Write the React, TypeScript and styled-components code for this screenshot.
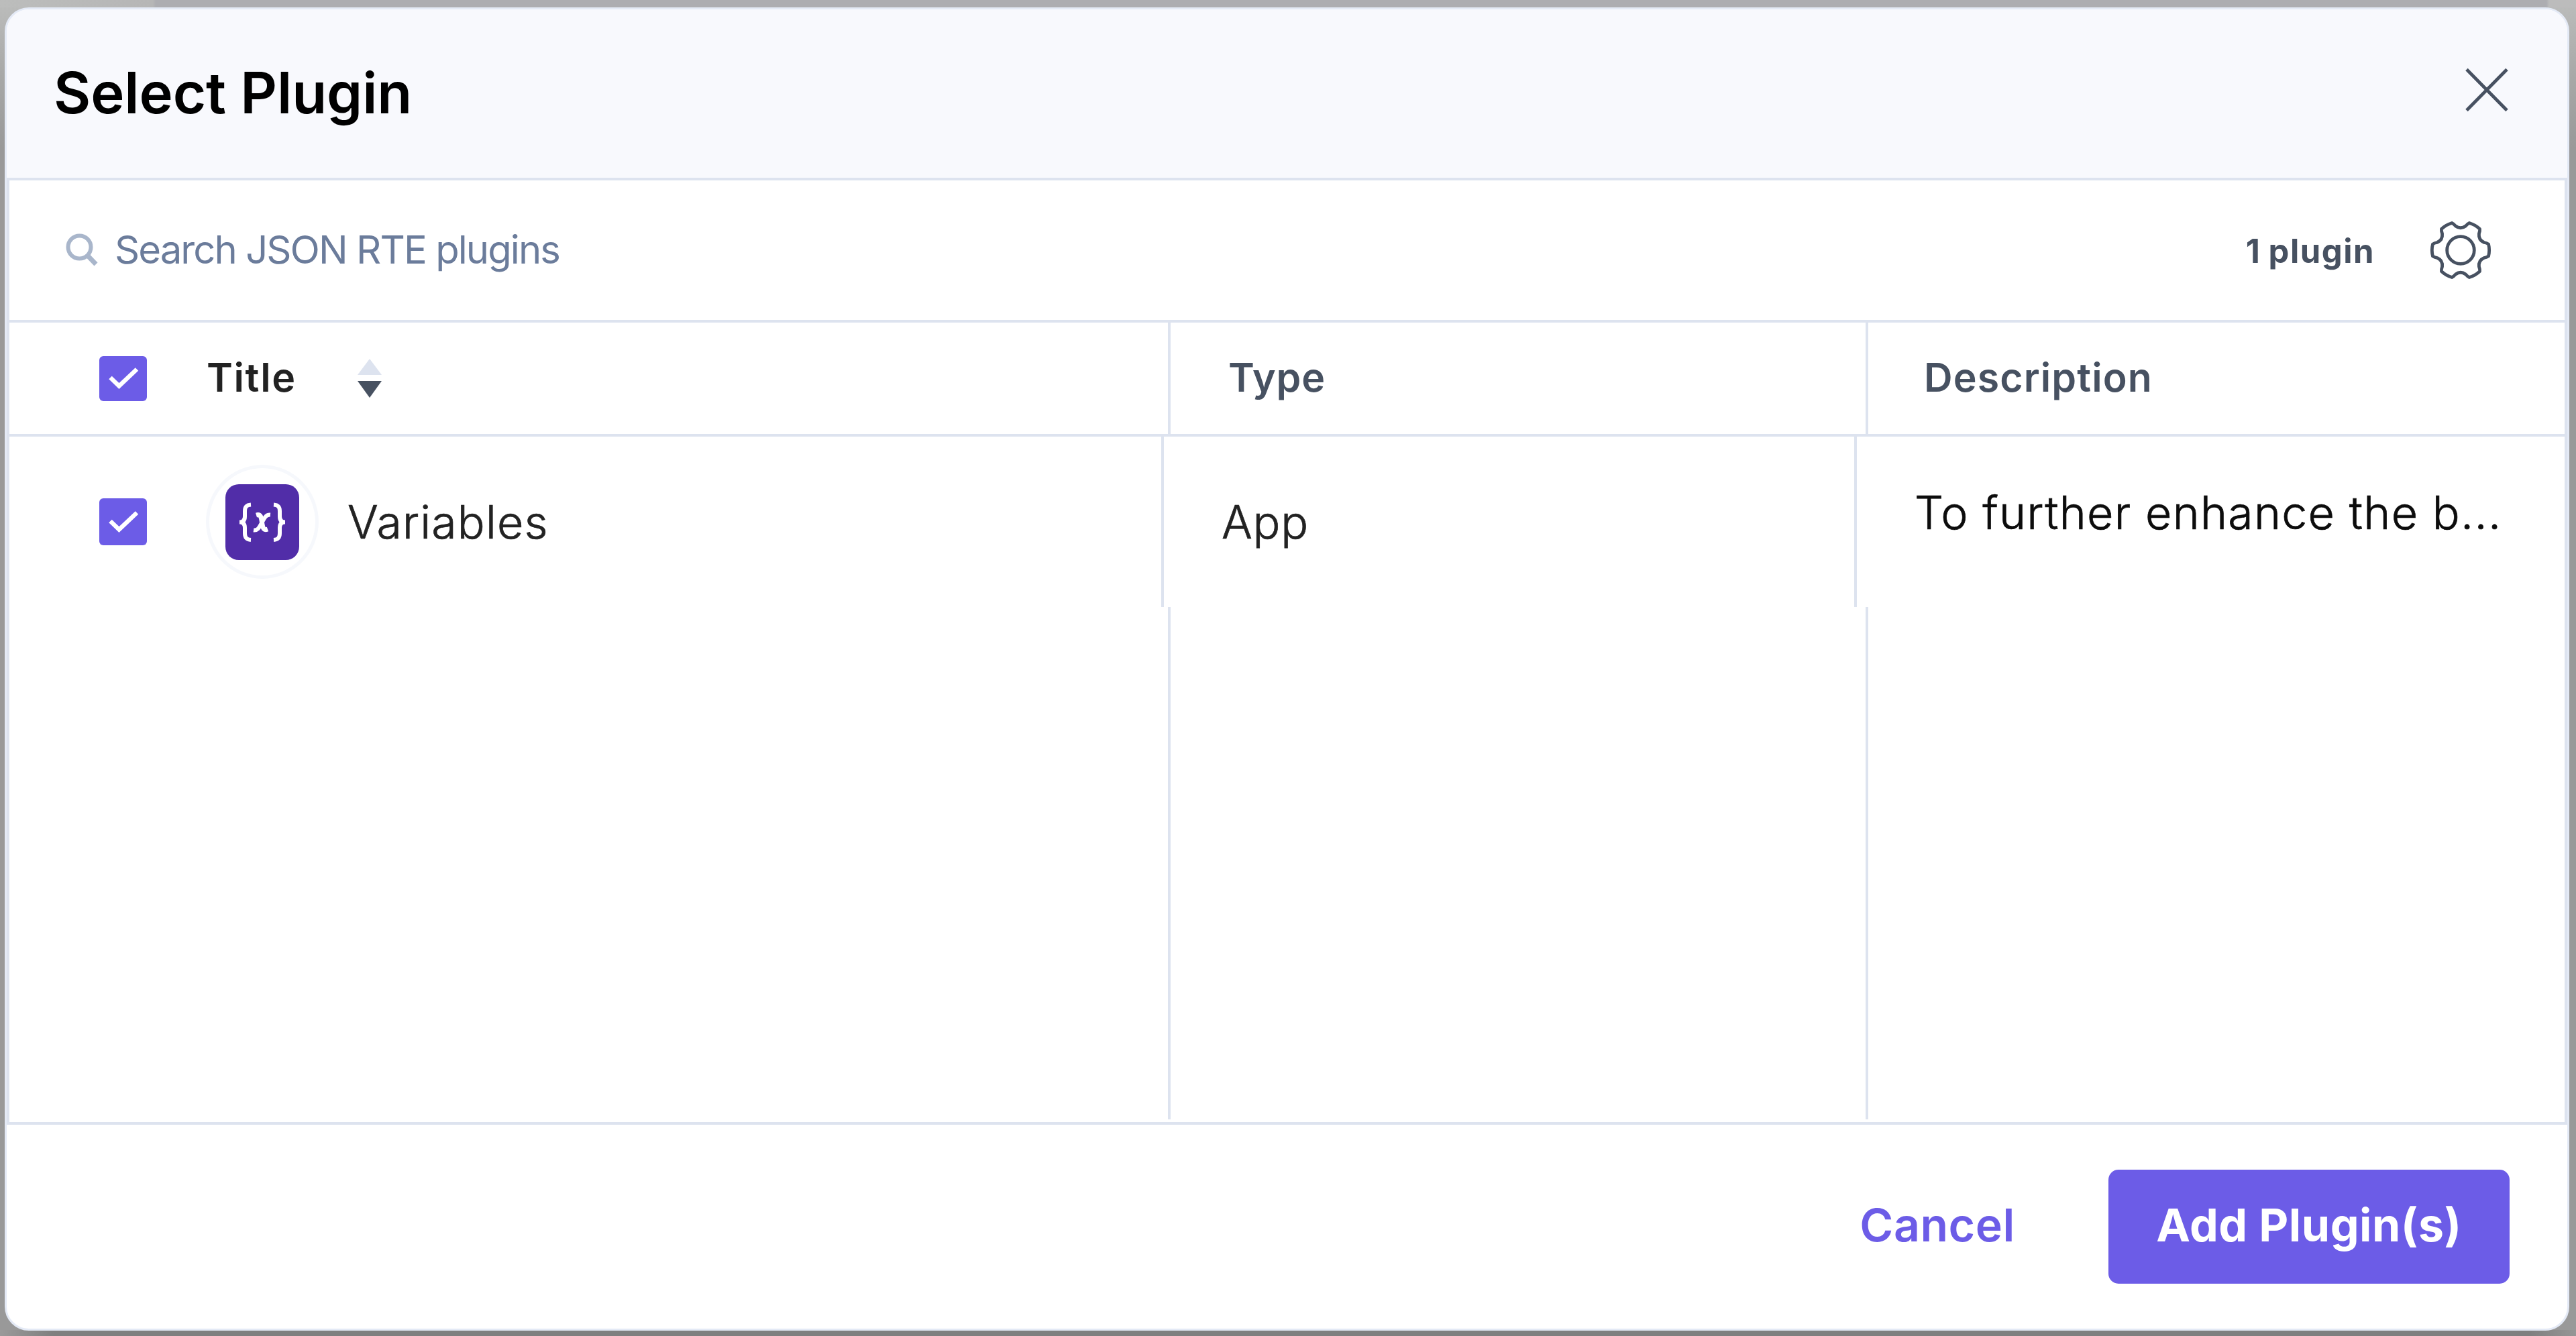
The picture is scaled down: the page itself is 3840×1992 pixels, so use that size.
import React from 'react';
import styled, { createGlobalStyle } from 'styled-components';

const line = '#dde3ef';
const purple = '#6c5ce7';
const slate = '#475161';

const GlobalStyle = createGlobalStyle`
  * { box-sizing: border-box; }
  html, body { margin: 0; padding: 0; }
  body { font-family: Inter, "Liberation Sans", sans-serif; overflow: hidden; }
  svg { display: block; flex: none; overflow: visible; }
`;

const Backdrop = styled.div`
  display: flex;
  width: 3840px;
  height: 1992px;
  padding: 11px 10px 8px 7px;
  background:
    linear-gradient(90deg, #bcbdbc 0, #b6b6b6 228px, #adadb1 232px, #adadb1 3796px, #bcbcbc 3800px) 0 0 / 100% 11px no-repeat,
    linear-gradient(90deg, #9a9a9a 0, #7f7f7f 80px, #7f7f7f 3770px, #969696 3840px) 0 100% / 100% 9px no-repeat,
    linear-gradient(180deg, #bcbdbc 0, #a8a9a8 110px, #999 220px, #999 100%);
`;

const Modal = styled.section`
  flex: 1;
  display: flex;
  flex-direction: column;
  border: 3px solid #e4eaf6;
  border-radius: 36px;
  background: #fff;
  overflow: hidden;
`;

const Header = styled.header`
  height: 251px;
  flex: none;
  display: flex;
  align-items: center;
  justify-content: space-between;
  padding: 0 88px 2px 70px;
  background: #f8f9fd;
`;

const Heading = styled.h1`
  margin: 0;
  padding-top: 1px;
  font-size: 85px;
  line-height: 102px;
  letter-spacing: -0.1px;
  font-weight: 600;
  color: #000;
`;

const IconButton = styled.button<{ $lift?: number }>`
  display: flex;
  padding: 0;
  margin-bottom: ${(p) => p.$lift ?? 0}px;
  border: 0;
  background: none;
`;

const Panel = styled.div`
  height: 1412px;
  flex: none;
  display: flex;
  flex-direction: column;
  border: 4px solid ${line};
`;

const SearchBar = styled.div`
  height: 212px;
  flex: none;
  display: flex;
  align-items: center;
  justify-content: space-between;
  padding: 0 110px 0 84px;
  border-bottom: 4px solid ${line};
`;

const SearchField = styled.label`
  display: flex;
  align-items: center;
  gap: 25px;
  padding-bottom: 3px;
  font-size: 58px;
  line-height: 70px;
  letter-spacing: -1.95px;
  color: #6b7c9b;
`;

const SearchTools = styled.div`
  display: flex;
  align-items: center;
  gap: 83px;
  padding-bottom: 1px;
`;

const Count = styled.span`
  padding-top: 4px;
  font-size: 49px;
  line-height: 60px;
  letter-spacing: 1.5px;
  word-spacing: -2px;
  font-weight: 700;
  color: ${slate};
`;

const HeadRow = styled.div`
  height: 170px;
  flex: none;
  display: grid;
  grid-template-columns: 1731px 1040px 1fr;
  border-bottom: 4px solid ${line};
`;

const BodyRow = styled.div`
  height: 254px;
  flex: none;
  display: grid;
  grid-template-columns: 1721px 1033px 1fr;
`;

const EmptyRows = styled.div`
  flex: 1;
  display: grid;
  grid-template-columns: 1731px 1040px 1fr;
  margin-bottom: 4px;
`;

const Cell = styled.div<{ $inset?: number }>`
  min-width: 0;
  display: flex;
  align-items: center;
  padding-left: ${(p) => p.$inset ?? 0}px;
  &:not(:last-child) { border-right: 4px solid ${line}; }
`;

const ColumnName = styled.span<{ $color?: string; $spacing?: number }>`
  padding-bottom: 3px;
  font-size: 59px;
  line-height: 70px;
  letter-spacing: ${(p) => p.$spacing ?? 1.1}px;
  font-weight: 600;
  color: ${(p) => p.$color ?? slate};
`;

const CellText = styled.span<{ $color?: string; $raise?: number; $spacing?: number }>`
  padding-bottom: ${(p) => p.$raise ?? 0}px;
  font-size: 68px;
  line-height: 82px;
  letter-spacing: ${(p) => p.$spacing ?? 1.15}px;
  font-weight: 300;
  -webkit-text-stroke: 0.7px currentColor;
  color: ${(p) => p.$color ?? '#222'};
  white-space: nowrap;
`;

const CheckBox = styled.span<{ $height: number }>`
  flex: none;
  width: 71px;
  height: ${(p) => p.$height}px;
  display: flex;
  align-items: center;
  justify-content: center;
  border-radius: 6px;
  background: ${purple};
`;

const SortArrows = styled.span`
  display: flex;
  margin-left: 91px;
`;

const TitleLabel = styled.div`
  display: flex;
  align-items: center;
  margin-left: 89px;
`;

const Avatar = styled.span`
  flex: none;
  width: 168px;
  height: 170px;
  display: flex;
  align-items: center;
  justify-content: center;
  margin: 0 43px 0 88px;
  border: 5px solid #f6f8fc;
  border-radius: 50%;
`;

const AppTile = styled.span`
  width: 110px;
  height: 113px;
  border-radius: 20px;
  background: #512da8;
`;

const Footer = styled.footer`
  flex: 1;
  display: flex;
  align-items: flex-start;
  justify-content: flex-end;
  gap: 42px;
  padding: 67px 86px 0 0;
`;

const Button = styled.button<{ $primary?: boolean }>`
  width: ${(p) => (p.$primary ? 598 : 426)}px;
  height: 170px;
  padding: 0 0 6px;
  border: 0;
  border-radius: 15px;
  font-family: inherit;
  font-size: 68px;
  line-height: 82px;
  font-weight: ${(p) => (p.$primary ? 700 : 600)};
  letter-spacing: 0.5px;
  color: ${(p) => (p.$primary ? '#fff' : purple)};
  background: ${(p) => (p.$primary ? purple : 'transparent')};
`;

const gearPath = (() => {
  const turn = (x: number, y: number, deg: number) => {
    const a = (deg * Math.PI) / 180;
    const px = x * Math.cos(a) - y * Math.sin(a);
    const py = x * Math.sin(a) + y * Math.cos(a);
    return `${px.toFixed(2)} ${py.toFixed(2)}`;
  };
  let d = `M${turn(-13, -40.5, 0)}`;
  for (let deg = 0; deg < 360; deg += 60) {
    d += `Q${turn(-10.5, -39.5, deg)} ${turn(-7.5, -36, deg)}`;
    d += `Q${turn(0, -30.5, deg)} ${turn(7.5, -36, deg)}`;
    d += `Q${turn(10.5, -39.5, deg)} ${turn(13, -40.5, deg)}`;
    d += `Q${turn(21.9, -37.9, deg)} ${turn(-13, -40.5, deg + 60)}`;
  }
  return d + 'Z';
})();

const CloseIcon = () => (
  <svg width="64" height="64" viewBox="0 0 64 64" fill="none" stroke={slate} strokeWidth="4.8">
    <path d="M2 1.5 62 62.5M62 1.5 2 62.5" />
  </svg>
);

const SearchIcon = () => (
  <svg width="48" height="48" viewBox="0 0 48 48" fill="none" stroke="#a9b6cb" strokeWidth="6">
    <circle cx="20.5" cy="20.5" r="17" />
    <path d="M32.5 33 45 46" strokeWidth="7" />
  </svg>
);

const GearIcon = () => (
  <svg width="90" height="88" viewBox="-45 -44 90 88" fill="none" stroke={slate} strokeWidth="4.8" strokeLinejoin="round">
    <path d={gearPath} />
    <circle r="20.3" />
  </svg>
);

const CheckIcon = () => (
  <svg width="44" height="32" viewBox="0 0 44 32" fill="none" stroke="#fff" strokeWidth="6.5">
    <path d="M2.5 15 15.5 27.5 42 2.5" />
  </svg>
);

const SortIcon = () => (
  <svg width="36" height="58" viewBox="0 0 36 58">
    <path d="M18 0 36 24H0Z" fill={line} />
    <path d="M0 33H36L18 58Z" fill={slate} />
  </svg>
);

const VariableIcon = () => (
  <svg width="110" height="113" viewBox="0 0 110 113" fill="none" stroke="#fff" strokeWidth="6">
    <path d="M38 30.5C31 31 29 34 29 40V48C29 53 27 56.6 21 56.6C27 56.6 29 60 29 65V73C29 79 31 82.5 38 83" />
    <path d="M72 30.5C79 31 81 34 81 40V48C81 53 83 56.6 89 56.6C83 56.6 81 60 81 65V73C81 79 79 82.5 72 83" />
    <path d="M46 46C53 44 53.500 50 54.500 57C56 67 57.500 69 63 67" strokeWidth="7" />
    <path d="M67 45.500C60 45 58 51 54.500 57C51 63 49 69.500 42 68.500" strokeWidth="6" />
  </svg>
);

const Checked = ({ height }: { height: number }) => (
  <CheckBox $height={height} role="checkbox" aria-checked="true">
    <CheckIcon />
  </CheckBox>
);

export default function App() {
  return (
    <>
      <GlobalStyle />
      <Backdrop>
        <Modal>
          <Header>
            <Heading>Select Plugin</Heading>
            <IconButton $lift={9}>
              <CloseIcon />
            </IconButton>
          </Header>
          <Panel>
            <SearchBar>
              <SearchField>
                <SearchIcon />
                Search JSON RTE plugins
              </SearchField>
              <SearchTools>
                <Count>1 plugin</Count>
                <IconButton>
                  <GearIcon />
                </IconButton>
              </SearchTools>
            </SearchBar>
            <HeadRow>
              <Cell $inset={134}>
                <Checked height={67} />
                <TitleLabel>
                  <ColumnName $color="#222" $spacing={1.6}>Title</ColumnName>
                  <SortArrows>
                    <SortIcon />
                  </SortArrows>
                </TitleLabel>
              </Cell>
              <Cell $inset={86}>
                <ColumnName $spacing={0.8}>Type</ColumnName>
              </Cell>
              <Cell $inset={83}>
                <ColumnName>Description</ColumnName>
              </Cell>
            </HeadRow>
            <BodyRow>
              <Cell $inset={134}>
                <Checked height={70} />
                <Avatar>
                  <AppTile>
                    <VariableIcon />
                  </AppTile>
                </Avatar>
                <CellText>Variables</CellText>
              </Cell>
              <Cell $inset={86}>
                <CellText $spacing={0.8}>App</CellText>
              </Cell>
              <Cell $inset={86}>
                <CellText $color="#0c0c0c" $raise={28} $spacing={1.3}>To further enhance the b...</CellText>
              </Cell>
            </BodyRow>
            <EmptyRows>
              <Cell />
              <Cell />
              <Cell />
            </EmptyRows>
          </Panel>
          <Footer>
            <Button>Cancel</Button>
            <Button $primary>Add Plugin(s)</Button>
          </Footer>
        </Modal>
      </Backdrop>
    </>
  );
}
